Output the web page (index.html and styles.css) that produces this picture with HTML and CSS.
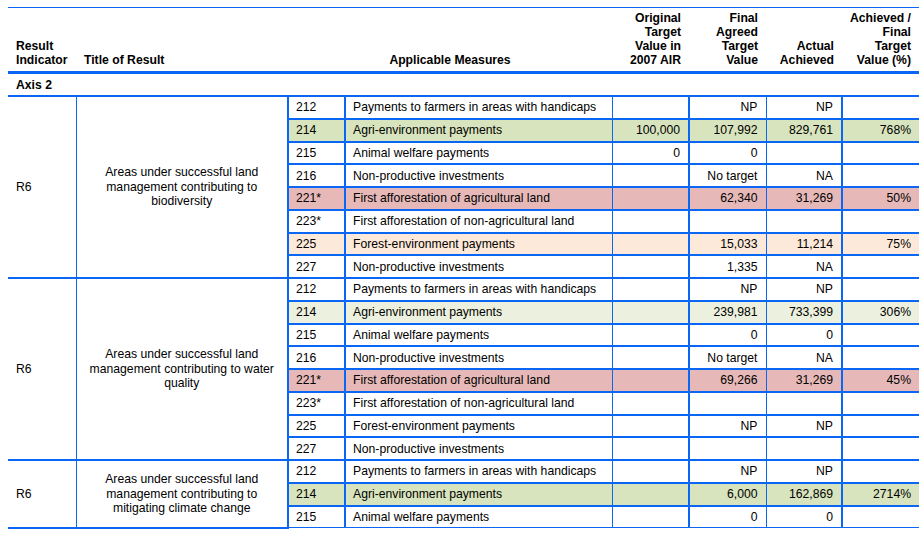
FILE: index.html
```html
<!DOCTYPE html>
<html>
<head>
<meta charset="utf-8">
<link rel="stylesheet" href="styles.css">
</head>
<body>
<table class="rt">
  <colgroup>
    <col class="c1"><col class="c2"><col class="c3"><col class="c4">
    <col class="c5"><col class="c6"><col class="c7"><col class="c8">
  </colgroup>
  <thead>
    <tr class="head">
      <th class="h-left h-ind">Result<br>Indicator</th>
      <th class="h-left h-title">Title of Result</th>
      <th class="h-center" colspan="2">Applicable Measures</th>
      <th class="h-right">Original<br>Target<br>Value in<br>2007 AIR</th>
      <th class="h-right">Final<br>Agreed<br>Target<br>Value</th>
      <th class="h-right">Actual<br>Achieved</th>
      <th class="h-right">Achieved /<br>Final<br>Target<br>Value (%)</th>
    </tr>
  </thead>
  <tbody>
    <tr class="axis"><td colspan="8">Axis 2</td></tr>

    <tr class="r gtop">
      <td class="ind" rowspan="8">R6</td>
      <td class="title" rowspan="8">Areas under successful land<br>management contributing to<br>biodiversity</td>
      <td class="code">212</td><td class="desc">Payments to farmers in areas with handicaps</td>
      <td class="num n5"></td><td class="num n6">NP</td><td class="num n7">NP</td><td class="num n8"></td>
    </tr>
    <tr class="r green">
      <td class="code">214</td><td class="desc">Agri-environment payments</td>
      <td class="num n5">100,000</td><td class="num n6">107,992</td><td class="num n7">829,761</td><td class="num n8">768%</td>
    </tr>
    <tr class="r">
      <td class="code">215</td><td class="desc">Animal welfare payments</td>
      <td class="num n5">0</td><td class="num n6">0</td><td class="num n7"></td><td class="num n8"></td>
    </tr>
    <tr class="r">
      <td class="code">216</td><td class="desc">Non-productive investments</td>
      <td class="num n5"></td><td class="num n6">No target</td><td class="num n7">NA</td><td class="num n8"></td>
    </tr>
    <tr class="r red">
      <td class="code">221*</td><td class="desc">First afforestation of agricultural land</td>
      <td class="num n5"></td><td class="num n6">62,340</td><td class="num n7">31,269</td><td class="num n8">50%</td>
    </tr>
    <tr class="r">
      <td class="code">223*</td><td class="desc">First afforestation of non-agricultural land</td>
      <td class="num n5"></td><td class="num n6"></td><td class="num n7"></td><td class="num n8"></td>
    </tr>
    <tr class="r peach">
      <td class="code">225</td><td class="desc">Forest-environment payments</td>
      <td class="num n5"></td><td class="num n6">15,033</td><td class="num n7">11,214</td><td class="num n8">75%</td>
    </tr>
    <tr class="r">
      <td class="code">227</td><td class="desc">Non-productive investments</td>
      <td class="num n5"></td><td class="num n6">1,335</td><td class="num n7">NA</td><td class="num n8"></td>
    </tr>

    <tr class="r gtop">
      <td class="ind" rowspan="8">R6</td>
      <td class="title" rowspan="8">Areas under successful land<br>management contributing to water<br>quality</td>
      <td class="code">212</td><td class="desc">Payments to farmers in areas with handicaps</td>
      <td class="num n5"></td><td class="num n6">NP</td><td class="num n7">NP</td><td class="num n8"></td>
    </tr>
    <tr class="r lgreen">
      <td class="code">214</td><td class="desc">Agri-environment payments</td>
      <td class="num n5"></td><td class="num n6">239,981</td><td class="num n7">733,399</td><td class="num n8">306%</td>
    </tr>
    <tr class="r">
      <td class="code">215</td><td class="desc">Animal welfare payments</td>
      <td class="num n5"></td><td class="num n6">0</td><td class="num n7">0</td><td class="num n8"></td>
    </tr>
    <tr class="r">
      <td class="code">216</td><td class="desc">Non-productive investments</td>
      <td class="num n5"></td><td class="num n6">No target</td><td class="num n7">NA</td><td class="num n8"></td>
    </tr>
    <tr class="r red">
      <td class="code">221*</td><td class="desc">First afforestation of agricultural land</td>
      <td class="num n5"></td><td class="num n6">69,266</td><td class="num n7">31,269</td><td class="num n8">45%</td>
    </tr>
    <tr class="r">
      <td class="code">223*</td><td class="desc">First afforestation of non-agricultural land</td>
      <td class="num n5"></td><td class="num n6"></td><td class="num n7"></td><td class="num n8"></td>
    </tr>
    <tr class="r">
      <td class="code">225</td><td class="desc">Forest-environment payments</td>
      <td class="num n5"></td><td class="num n6">NP</td><td class="num n7">NP</td><td class="num n8"></td>
    </tr>
    <tr class="r">
      <td class="code">227</td><td class="desc">Non-productive investments</td>
      <td class="num n5"></td><td class="num n6"></td><td class="num n7"></td><td class="num n8"></td>
    </tr>

    <tr class="r gtop">
      <td class="ind" rowspan="3">R6</td>
      <td class="title" rowspan="3">Areas under successful land<br>management contributing to<br>mitigating climate change</td>
      <td class="code">212</td><td class="desc">Payments to farmers in areas with handicaps</td>
      <td class="num n5"></td><td class="num n6">NP</td><td class="num n7">NP</td><td class="num n8"></td>
    </tr>
    <tr class="r green">
      <td class="code">214</td><td class="desc">Agri-environment payments</td>
      <td class="num n5"></td><td class="num n6">6,000</td><td class="num n7">162,869</td><td class="num n8">2714%</td>
    </tr>
    <tr class="r last">
      <td class="code">215</td><td class="desc">Animal welfare payments</td>
      <td class="num n5"></td><td class="num n6">0</td><td class="num n7">0</td><td class="num n8"></td>
    </tr>
  </tbody>
</table>
</body>
</html>
```

FILE: styles.css
```css
html, body {
  margin: 0;
  padding: 0;
  background: #ffffff;
}

body {
  font-family: "Liberation Sans", Arial, sans-serif;
  font-size: 12.2px;
  color: #000000;
}

.rt {
  border-collapse: collapse;
  table-layout: fixed;
  width: 911px;
  margin: 7px 0 0 8px;
}

.c1 { width: 68px; }
.c2 { width: 212px; }
.c3 { width: 57px; }
.c4 { width: 267px; }
.c5 { width: 77px; }
.c6 { width: 77px; }
.c7 { width: 76px; }
.c8 { width: 77px; }

.head th {
  border-top: 1px solid #0a66f5;
  border-bottom: 3px solid #0a66f5;
  height: 57px;
  padding: 2px 8px 4px 8px;
  vertical-align: bottom;
  font-weight: bold;
  line-height: 14px;
}

.h-left { text-align: left; }
.h-title { padding-left: 7px; }
.h-center { text-align: center; }
.h-right { text-align: right; }

.axis td {
  height: 21px;
  padding: 0 8px;
  font-weight: bold;
  border-bottom: 2px solid #0a66f5;
  vertical-align: middle;
}

.r td {
  height: 20.75px;
  padding: 0 7px;
  line-height: 14px;
  vertical-align: middle;
  border-top: 2px solid #0a66f5;
  border-bottom: 2px solid #0a66f5;
}

.r .ind {
  padding-left: 8px;
  border-right: 1px solid #0a66f5;
}

.r .title {
  text-align: center;
  padding: 0 4px;
  line-height: 14.5px;
  border-right: 2px solid #0a66f5;
}

.r .code {
  border-right: 2px solid #0a66f5;
}

.r .desc {
  border-right: 1px solid #0a66f5;
}

.r .num {
  text-align: right;
  padding-right: 8px;
  padding-left: 2px;
}

.r .n5 { border-right: 2px solid #0a66f5; }
.r .n6 { border-right: 1px solid #0a66f5; }
.r .n7 { border-right: 2px solid #0a66f5; }

.gtop td {
  border-top: 1px solid #0a66f5;
}

.last td {
  border-bottom: 1px solid #0a66f5;
}

.green td { background: #d7e4bd; }
.lgreen td { background: #ebf1de; }
.red td { background: #e6b9b8; }
.peach td { background: #fde9d9; }
```
